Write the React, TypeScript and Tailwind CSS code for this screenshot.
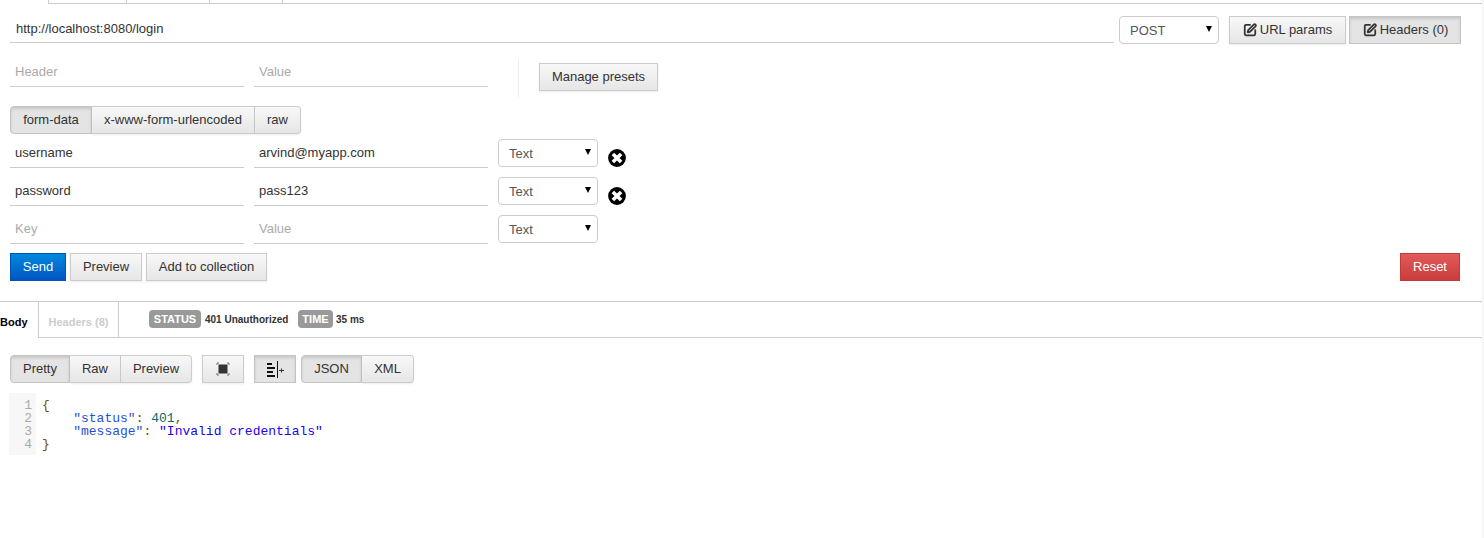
import { SquarePen } from 'lucide-react'

const sans = 'font-["Liberation_Sans",Arial,sans-serif]'

const btn =
  'h-7 flex items-center justify-center border border-[#ccc] bg-gradient-to-b from-[#f8f8f8] to-[#e6e6e6] text-[13px] text-[#333] shadow-[0_1px_2px_rgba(0,0,0,0.08)]'
const btnActive =
  'h-7 flex items-center justify-center border border-[#c4c4c4] bg-[#e4e4e4] text-[13px] text-[#333] shadow-[inset_0_2px_3px_rgba(0,0,0,0.12)]'

function Field({ value, placeholder, width }: { value?: string; placeholder?: string; width: string }) {
  return (
    <div className={`${width} h-[29px] flex items-center border-b border-[#ccc] pl-[5px] text-[13px] ${value ? 'text-[#333]' : 'text-[#aaa]'}`}>
      {value || placeholder}
    </div>
  )
}

function SelectBox({ label }: { label: string }) {
  return (
    <div className="w-[100px] h-7 flex items-center justify-between border border-[#ccc] rounded-[4px] bg-white pl-[10px] pr-[6px] text-[13px] text-[#555]">
      <span className="pt-[2px]">{label}</span>
      <svg className="mb-[2px]" width="6" height="6" viewBox="0 0 6 6">
        <path d="M0 0H6L3 6Z" fill="#000" />
      </svg>
    </div>
  )
}

function Group({ items, active }: { items: { label: string; width: string }[]; active: number }) {
  return (
    <div className="flex">
      {items.map((item, i) => (
        <div
          key={item.label}
          className={`${item.width} ${i === active ? btnActive : btn} ${i === 0 ? 'rounded-l-[4px]' : 'border-l-0'} ${
            i === items.length - 1 ? 'rounded-r-[4px]' : ''
          }`}
        >
          {item.label}
        </div>
      ))}
    </div>
  )
}

function RemoveIcon() {
  return (
    <svg className="ml-[10px] mt-[10px]" width="18" height="18" viewBox="0 0 18 18">
      <circle cx="9" cy="9" r="8.9" fill="#000" />
      <path d="M4.9 4.9L13.1 13.1M13.1 4.9L4.9 13.1" stroke="#fff" strokeWidth="3.6" />
    </svg>
  )
}

function FormRow({ name, value, removable }: { name?: string; value?: string; removable?: boolean }) {
  return (
    <div className="flex h-7 mb-[10px]">
      <Field width="w-[234px]" value={name} placeholder="Key" />
      <div className="w-[10px]" />
      <Field width="w-[234px]" value={value} placeholder="Value" />
      <div className="w-[10px]" />
      <SelectBox label="Text" />
      {removable && <RemoveIcon />}
    </div>
  )
}

export default function App() {
  return (
    <div className={`${sans} relative w-[1484px] h-[538px] bg-white overflow-hidden`}>
      <div className="w-[1482px]">
        {/* top tabs, cut off by the window */}
        <div className="flex h-[4px] pl-[48px]">
          <div className="flex w-full border-b border-[#ccc]">
            <div className="w-[78px] border-l border-[#ccc]" />
            <div className="w-[83px] border-l border-[#ccc]" />
            <div className="w-[73px] border-l border-[#ccc]" />
            <div className="flex-1 border-l border-[#ccc]" />
          </div>
        </div>

        {/* url row */}
        <div className="flex items-start pl-[10px] pt-[12px] h-[54px]">
          <div className="w-[1104px] h-[27px] flex items-center border-b border-[#ccc] pl-[6px] text-[13px] text-[#333]">
            http://localhost:8080/login
          </div>
          <div className="ml-[5px]">
            <SelectBox label="POST" />
          </div>
          <div className={`${btn} ml-[10px] w-[117px] gap-[3px]`}>
            <SquarePen size={14} strokeWidth={3} />
            URL params
          </div>
          <div className={`${btnActive} ml-[3px] w-[112px] gap-[3px] pl-[1px]`}>
            <SquarePen size={14} strokeWidth={3} />
            Headers (0)
          </div>
        </div>

        {/* header row */}
        <div className="flex pl-[10px] pt-[1px] h-[46px]">
          <div className="flex -mt-px">
            <Field width="w-[234px]" placeholder="Header" />
            <div className="w-[10px]" />
            <Field width="w-[234px]" placeholder="Value" />
          </div>
          <div className="ml-[30px] w-px h-[38px] bg-[#eee]" />
          <div className={`${btn} ml-[20px] mt-[4px] w-[119px]`}>Manage presets</div>
        </div>

        {/* body type */}
        <div className="pl-[10px] mt-[2px] mb-[5px]">
          <Group
            active={0}
            items={[
              { label: 'form-data', width: 'w-[82px]' },
              { label: 'x-www-form-urlencoded', width: 'w-[163px]' },
              { label: 'raw', width: 'w-[46px]' },
            ]}
          />
        </div>

        <div className="pl-[10px]">
          <FormRow name="username" value="arvind@myapp.com" removable />
          <FormRow name="password" value="pass123" removable />
          <FormRow />
        </div>

        {/* actions */}
        <div className="flex pl-[10px] pr-[22px]">
          <div className="w-[56px] h-7 flex items-center justify-center border border-[#0055b3] bg-gradient-to-b from-[#0088dd] to-[#0055c4] text-[13px] text-white">
            Send
          </div>
          <div className={`${btn} ml-[4px] w-[72px]`}>Preview</div>
          <div className={`${btn} ml-[4px] w-[121px]`}>Add to collection</div>
          <div className="ml-auto w-[60px] h-7 flex items-center justify-center border border-[#c23a3a] bg-gradient-to-b from-[#e25a5a] to-[#c93c3c] text-[13px] text-white">
            Reset
          </div>
        </div>

        {/* response tabs */}
        <div className="mt-[20px] border-t border-[#ccc] flex h-[37px]">
          <div className="w-[38px] flex items-center text-[11px] font-bold text-black pt-[5px]">Body</div>
          <div className="flex-1 flex border-l border-b border-[#ccc]">
            <div className="w-[80px] h-[35px] flex items-center justify-center border-r border-[#ccc] text-[11px] font-bold text-[#ccc] pt-[5px]">
              Headers (8)
            </div>
            <div className="flex items-center h-[34px] pl-[30px] text-[10px] font-bold text-[#333]">
              <span className="w-[52px] h-[18px] flex items-center justify-center rounded-[4px] bg-[#999] text-[11px] text-white">STATUS</span>
              <span className="ml-[4px] w-[93px]">401 Unauthorized</span>
              <span className="w-[35px] h-[18px] flex items-center justify-center rounded-[4px] bg-[#999] text-[11px] text-white">TIME</span>
              <span className="ml-[3px]">35 ms</span>
            </div>
          </div>
        </div>

        {/* response toolbar */}
        <div className="flex pl-[10px] mt-[17px]">
          <Group
            active={0}
            items={[
              { label: 'Pretty', width: 'w-[60px]' },
              { label: 'Raw', width: 'w-[51px]' },
              { label: 'Preview', width: 'w-[71px]' },
            ]}
          />
          <div className={`${btn} ml-[10px] w-[42px]`}>
            <svg width="14" height="14" viewBox="0 0 14 14">
              <rect x="2.5" y="2.5" width="9" height="9" fill="#333" />
              <path d="M1 3V1H3M11 1H13V3M13 11V13H11M3 13H1V11" fill="none" stroke="#555" strokeWidth="0.8" />
            </svg>
          </div>
          <div className={`${btnActive} ml-[10px] w-[42px]`}>
            <svg width="18" height="18" viewBox="0 0 18 18">
              <path d="M1 4H6M1 8H9M1 12H7M1 16H9" stroke="#111" strokeWidth="2" />
              <path d="M11.5 1V18" stroke="#111" strokeWidth="1" />
              <path d="M13 10.5H18M15.5 8.5V12.5" stroke="#333" strokeWidth="1" />
            </svg>
          </div>
          <div className="ml-[5px]">
            <Group
              active={0}
              items={[
                { label: 'JSON', width: 'w-[61px]' },
                { label: 'XML', width: 'w-[52px]' },
              ]}
            />
          </div>
        </div>

        {/* response body */}
        <div className='flex mt-[10px] ml-[9px] font-["Liberation_Mono",monospace] text-[13px] leading-[13px]'>
          <div className="w-[27px] h-[62px] bg-[#f7f7f7] pt-[6px] pr-[4px] text-right text-[#aaa]">
            <div>1</div>
            <div>2</div>
            <div>3</div>
            <div>4</div>
          </div>
          <div className="pl-[6px] pt-[6px] whitespace-pre">
            <div className="text-[#7a4a00]">{'{'}</div>
            <div>
              <span className="text-[#1f4fd8]">{'    "status"'}</span>
              <span className="text-[#7a4a00]">: </span>
              <span className="text-[#0a6a6a]">401</span>
              <span className="text-[#7a4a00]">,</span>
            </div>
            <div>
              <span className="text-[#1f4fd8]">{'    "message"'}</span>
              <span className="text-[#7a4a00]">: </span>
              <span className="text-[#2200ee]">"Invalid credentials"</span>
            </div>
            <div className="text-[#7a4a00]">{'}'}</div>
          </div>
        </div>
      </div>
      {/* page scrollbar edge */}
      <div className="absolute right-0 top-0 w-[2px] h-full bg-[#f5f5f5]" />
    </div>
  )
}
